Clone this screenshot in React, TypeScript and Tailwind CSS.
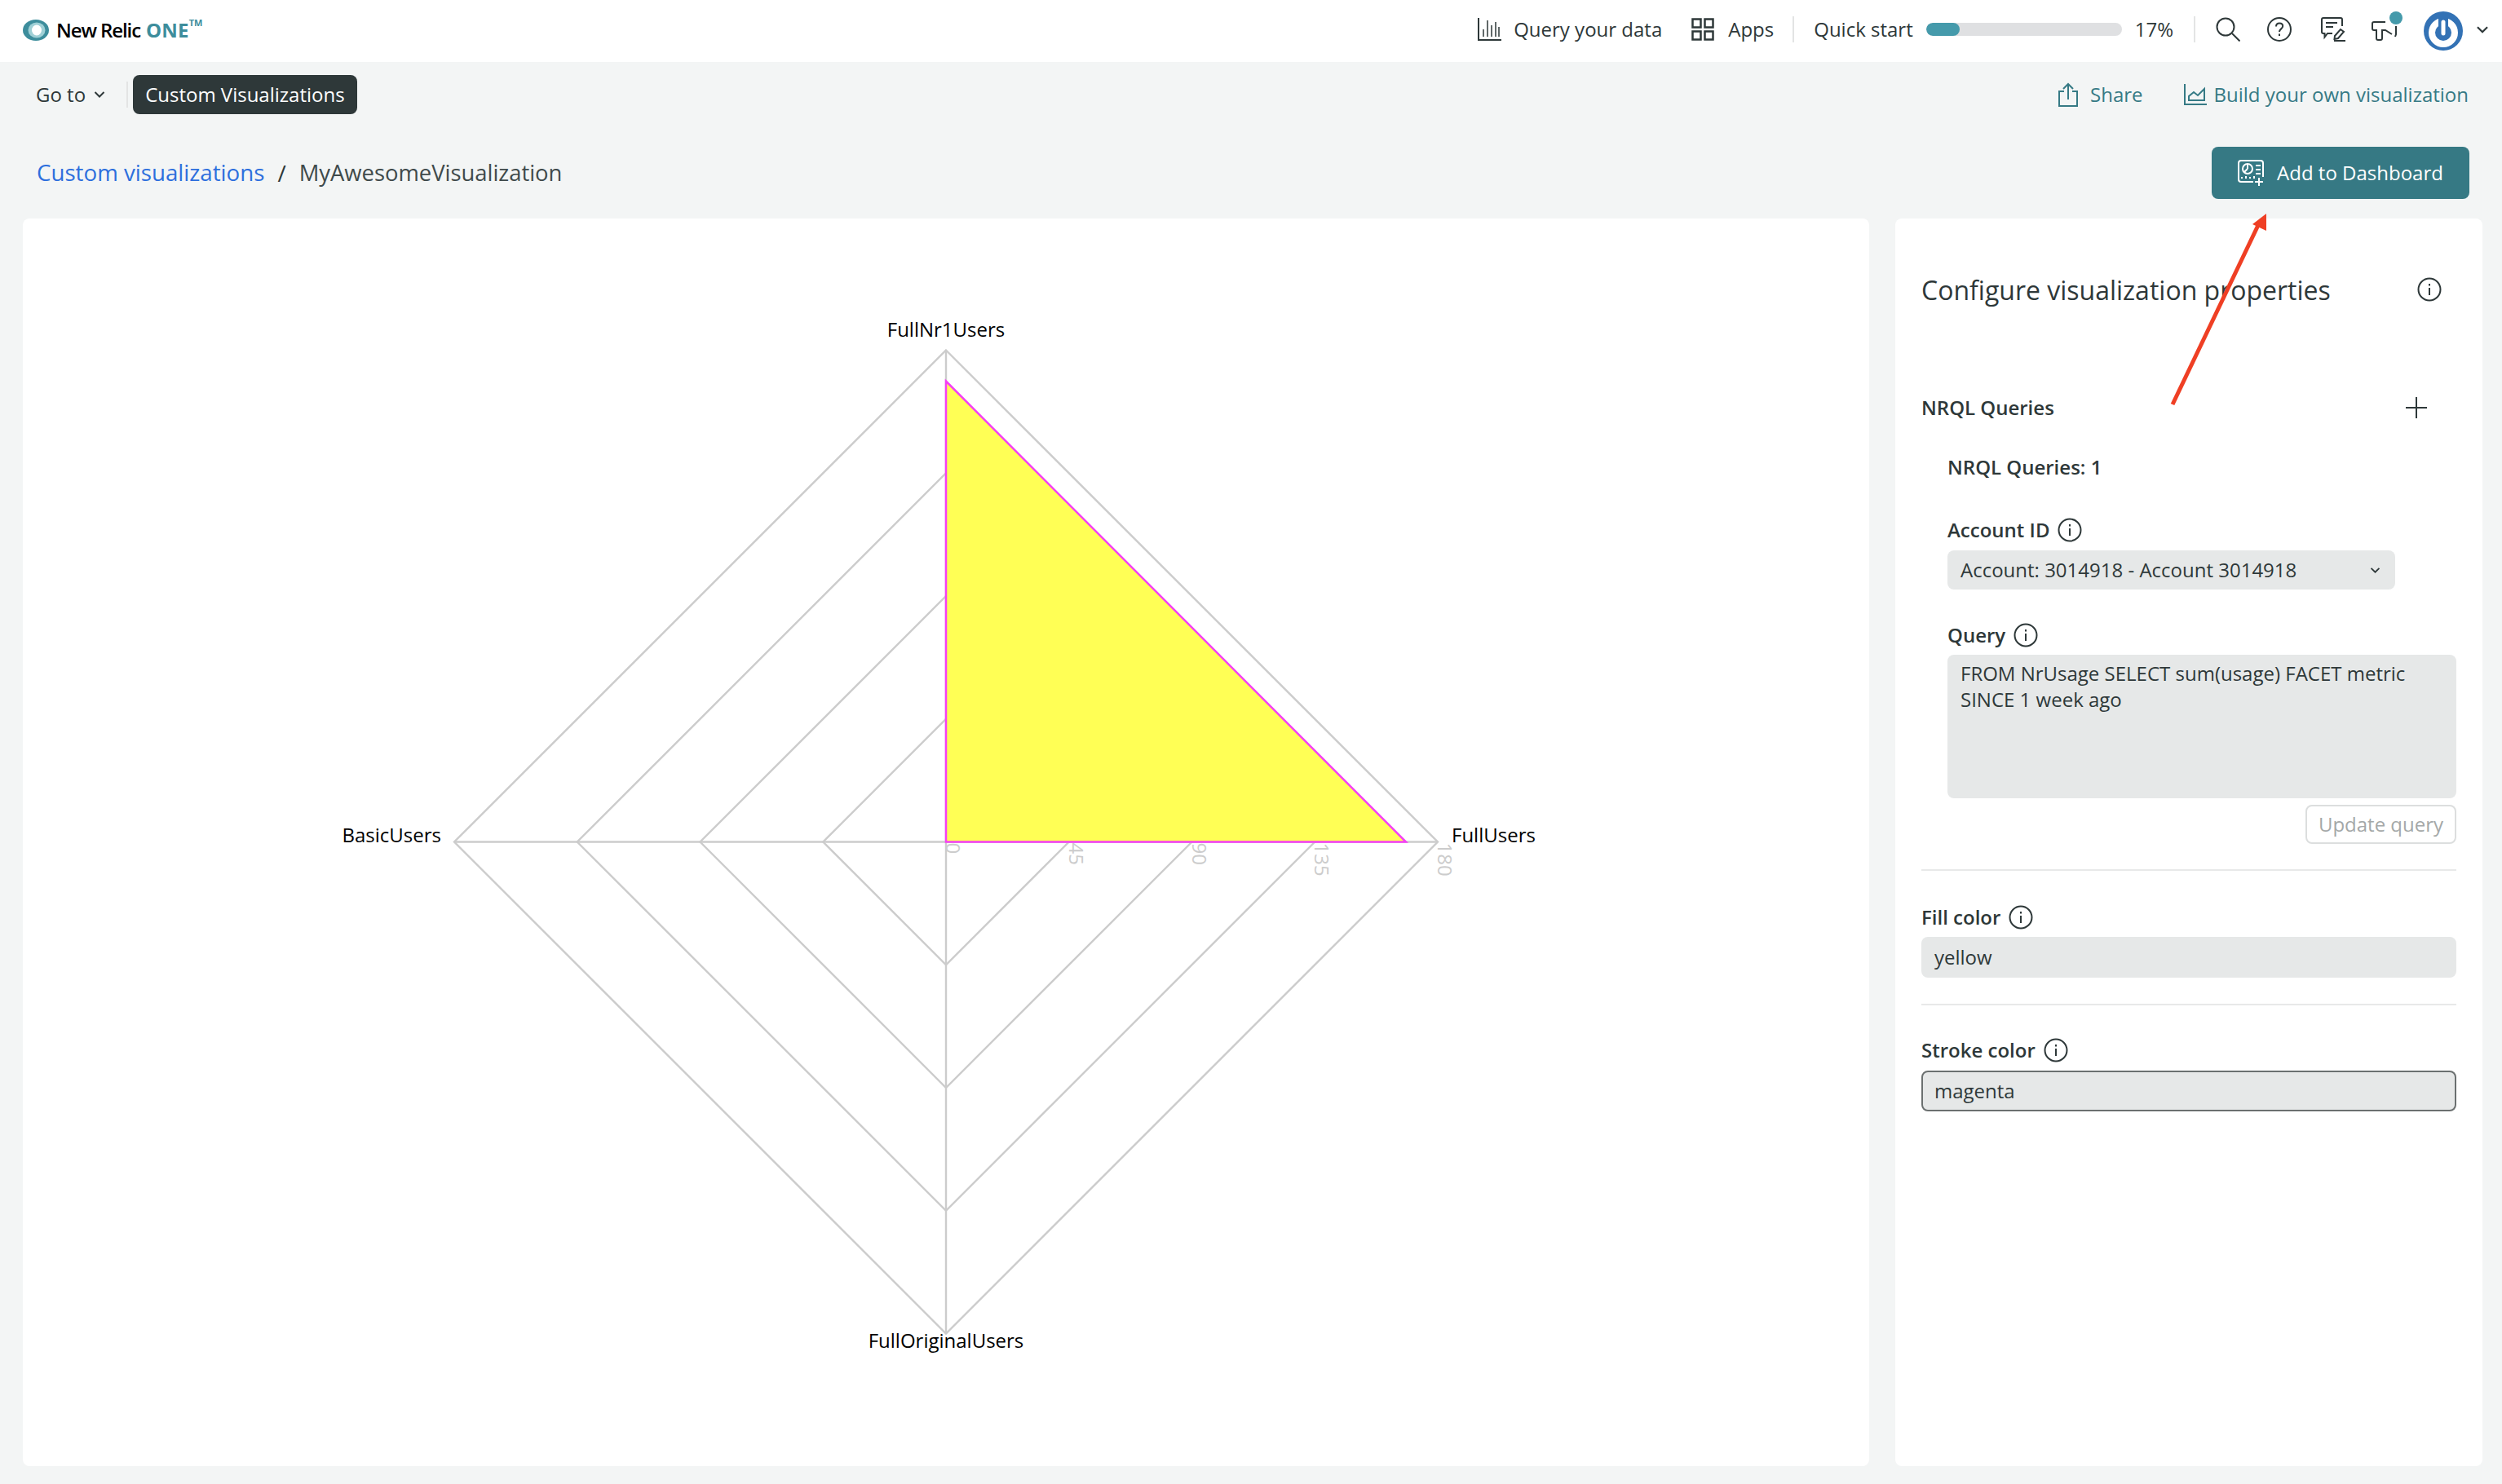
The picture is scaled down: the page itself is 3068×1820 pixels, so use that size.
const sans = { fontFamily: '"Open Sans", "Noto Sans", sans-serif' };

function InfoIcon({ className = "" }: { className?: string }) {
  return (
    <svg viewBox="0 0 30 30" className={`w-[30px] h-[30px] ${className}`} fill="none" stroke="#2e3839" strokeWidth="2">
      <circle cx="15" cy="15" r="13.5" />
      <path d="M15 13v9" />
      <path d="M15 8v2.5" />
    </svg>
  );
}

function Chevron({ className = "" }: { className?: string }) {
  return (
    <svg viewBox="0 0 14 10" className={className} fill="none" stroke="#2e3839" strokeWidth="2">
      <path d="M1.5 2 7 7.5 12.5 2" />
    </svg>
  );
}

function Divider() {
  return <div className="w-[2px] h-[32px] bg-[#e3e4e4]" />;
}

function FieldLabel({ text }: { text: string }) {
  return (
    <div className="flex items-center gap-[10px] h-[30px] text-[24px] font-semibold text-[#2e3839]">
      <span>{text}</span>
      <InfoIcon />
    </div>
  );
}

function RadarChart() {
  const cx = 1160;
  const cy = 1032.5;
  const rings = [150.75, 301.5, 452.25, 603];
  const ticks = ["0", "45", "90", "135", "180"];
  return (
    <svg viewBox="28 268 2264 1530" className="w-full h-full">
      {rings.map((r) => (
        <polygon
          key={r}
          points={`${cx},${cy - r} ${cx + r},${cy} ${cx},${cy + r} ${cx - r},${cy}`}
          fill="none"
          stroke="#cccccc"
          strokeWidth="2.4"
        />
      ))}
      <path d={`M${cx} ${cy - 603}V${cy + 603}M${cx - 603} ${cy}H${cx + 603}`} stroke="#cccccc" strokeWidth="2.4" />
      <polygon
        points={`${cx},${cy - 565} ${cx + 564},${cy} ${cx},${cy}`}
        fill="#ffff55"
        stroke="#f53ff5"
        strokeWidth="2.5"
      />
      {ticks.map((t, i) => (
        <text
          key={t}
          x={cx + i * 150.75}
          y={cy + 1}
          transform={`rotate(90 ${cx + i * 150.75} ${cy + 1})`}
          fontSize="24"
          fill="#cccccc"
          style={sans}
        >
          {t}
        </text>
      ))}
      <g fontSize="24" fill="#000000" style={sans}>
        <text x={1160} y={413} textAnchor="middle">FullNr1Users</text>
        <text x={1780} y={1033}>FullUsers</text>
        <text x={541} y={1033} textAnchor="end">BasicUsers</text>
        <text x={1160} y={1653} textAnchor="middle">FullOriginalUsers</text>
      </g>
    </svg>
  );
}

export default function App() {
  return (
    <div className="relative w-[3068px] h-[1820px] overflow-hidden bg-[#f3f5f5] text-[#2e3839]" style={sans}>
      <header className="h-[76px] bg-white flex items-center pl-[28px] pr-[16px]">
        <div className="flex items-center pb-[2px]">
          <svg viewBox="0 0 32 26" className="w-[32px] h-[26px]">
            <ellipse cx="16" cy="13" rx="16" ry="13" fill="#3d8d9c" />
            <ellipse cx="17" cy="13" rx="10.5" ry="9.5" fill="#9fd0d6" />
            <ellipse cx="17" cy="13" rx="6" ry="6.5" fill="#ffffff" />
          </svg>
          <span className="ml-[9px] text-[24px] font-semibold text-black tracking-[-1.1px]">New Relic</span>
          <span className="ml-[7px] text-[24px] font-bold text-[#3d8d9c] tracking-[0.2px]">ONE</span>
          <span className="text-[11px] font-bold text-[#3d8d9c] self-start leading-none mt-[3px]">TM</span>
        </div>
        <div className="ml-auto flex items-center text-[24px] pb-[4px] h-full">
          <svg viewBox="0 0 29 28" className="w-[29px] h-[28px]" fill="none" stroke="#2e3839" strokeWidth="2">
            <path d="M1 0v27h28" />
            <path d="M7 14v9M12 3v20M17 9v14M22 5v18M26 11v12" strokeWidth="1.5" />
          </svg>
          <span className="ml-[15px]">Query your data</span>
          <svg viewBox="0 0 28 28" className="ml-[36px] w-[28px] h-[28px]" fill="none" stroke="#2e3839" strokeWidth="2.5">
            <rect x="1.5" y="1.5" width="10" height="10" />
            <rect x="16.5" y="1.5" width="10" height="10" />
            <rect x="1.5" y="16.5" width="10" height="10" />
            <rect x="16.5" y="16.5" width="10" height="10" />
          </svg>
          <span className="ml-[17px]">Apps</span>
          <div className="ml-[23px]"><Divider /></div>
          <span className="ml-[24px]">Quick start</span>
          <div className="ml-[16px] w-[240px] h-[16px] rounded-full bg-[#dfe0e2] overflow-hidden">
            <div className="h-full rounded-full bg-[#459aab]" style={{ width: "17%" }} />
          </div>
          <span className="ml-[16px]">17%</span>
          <div className="ml-[25px]"><Divider /></div>
          <svg viewBox="0 0 30 30" className="ml-[25px] w-[30px] h-[30px]" fill="none" stroke="#2e3839" strokeWidth="2">
            <circle cx="12" cy="12" r="10.5" />
            <path d="m20 20 9.5 9.5" />
          </svg>
          <svg viewBox="0 0 30 30" className="ml-[33px] w-[30px] h-[30px]" fill="none" stroke="#2e3839" strokeWidth="2">
            <circle cx="15" cy="15" r="14" />
            <path d="M11 11.5c0-2.5 1.8-4 4.2-4s4 1.5 4 3.6c0 3.2-4.2 3.4-4.2 6.9" />
            <path d="M15 20.5V23" />
          </svg>
          <svg viewBox="0 0 31 30" className="ml-[36px] w-[31px] h-[30px]" fill="none" stroke="#2e3839" strokeWidth="2">
            <path d="M14 20H8l-3.500 4.500V20H3a2 2 0 0 1-2-2V3a2 2 0 0 1 2-2h21a2 2 0 0 1 2 2v8" />
            <path d="M6 7h14M6 12h9" />
            <path d="m17 23 7-8 4 3-7 8-4.500 1z" />
            <path d="M16 29h14" />
          </svg>
          <div className="relative ml-[31px] w-[32px] h-[32px]">
            <svg viewBox="0 0 32 32" className="w-[32px] h-[32px]" fill="none" stroke="#2e3839" strokeWidth="2">
              <path d="M17 7H3a2 2 0 0 0-2 2v6a2 2 0 0 0 2 2h3v10a2 2 0 0 0 2 2h3a2 2 0 0 0 2-2V17h4l8 5" />
              <path d="M30 12v10l-1 3" />
            </svg>
            <div className="absolute right-[-6px] top-[-6px] w-[16px] h-[16px] rounded-full bg-[#459aab]" />
          </div>
          <svg viewBox="0 0 48 48" className="ml-[32px] w-[48px] h-[48px] mt-[4px]">
            <circle cx="24" cy="24" r="24" fill="#3372b5" />
            <circle cx="24" cy="26" r="14" fill="none" stroke="#ffffff" strokeWidth="8" />
            <path d="M24 6v18" stroke="#3372b5" strokeWidth="12" />
            <path d="M24 13v14" stroke="#ffffff" strokeWidth="5" strokeLinecap="round" />
          </svg>
          <Chevron className="ml-[16px] w-[16px] h-[11px]" />
        </div>
      </header>

      <div className="h-[78px] flex items-center pl-[44px] pr-[41px] pt-[2px]">
        <span className="text-[24px]">Go to</span>
        <Chevron className="ml-[10px] w-[14px] h-[10px]" />
        <div className="ml-[26px]"><Divider /></div>
        <div className="ml-[6px] h-[48px] px-[15px] flex items-center rounded-[8px] bg-[#2e3839] text-[24px] font-medium text-white">
          Custom Visualizations
        </div>
        <div className="ml-auto flex items-center text-[24px] text-[#367a85]">
          <svg viewBox="0 0 24 30" className="w-[24px] h-[30px]" fill="none" stroke="#367a85" strokeWidth="2">
            <path d="M7 11H1v18h22V11h-6" />
            <path d="M12 21V2M6 8l6-6 6 6" />
          </svg>
          <span className="ml-[15px]">Share</span>
          <svg viewBox="0 0 28 26" className="ml-[50px] w-[28px] h-[26px]" fill="none" stroke="#367a85" strokeWidth="2">
            <path d="M1 0v25h27" />
            <path d="M6 20v-5l6-5 5 4 8-8v14z" />
          </svg>
          <span className="ml-[9px]">Build your own visualization</span>
        </div>
      </div>

      <div className="h-[114px] flex items-center pl-[45px] pr-[40px] pt-[2px]">
        <span className="text-[27.7px] text-[#2d6fdd]">Custom visualizations</span>
        <span className="ml-[16px] text-[28px] text-[#2e3839]">/</span>
        <span className="ml-[16px] text-[27.4px] text-[#3f4a4b]">MyAwesomeVisualization</span>
        <button className="ml-auto h-[64px] w-[316px] flex items-center justify-center gap-[16px] rounded-[8px] bg-[#367984] text-[24px] font-medium text-white">
          <svg viewBox="0 0 32 32" className="w-[32px] h-[32px]" fill="none" stroke="#ffffff" strokeWidth="2">
            <path d="M19 27H4a3 3 0 0 1-3-3V4a3 3 0 0 1 3-3h24a3 3 0 0 1 3 3v17" />
            <circle cx="12" cy="11" r="6" />
            <path d="M12 11V5M12 11l-4 4" />
            <path d="M22 7h6M22 12h6M22 17h6M5 23v-2M10 23v-3M15 23v-2M20 23v-3" />
            <path d="M26 22v10M21 27h10" />
          </svg>
          <span>Add to Dashboard</span>
        </button>
      </div>

      <main className="h-[1530px] flex pl-[28px]">
        <section className="w-[2264px] h-full rounded-[8px] bg-white overflow-hidden">
          <RadarChart />
        </section>
        <aside className="ml-[32px] w-[720px] h-full rounded-[8px] bg-white pl-[32px] pr-[32px]">
          <div className="h-[202px] pt-[68px] flex items-start pr-[18px]">
            <h2 className="text-[32px] leading-[40px]">Configure visualization properties</h2>
            <InfoIcon className="ml-auto mt-[4px]" />
          </div>
          <div className="flex items-center h-[60px] pr-[36px] text-[24px] font-semibold">
            <span>NRQL Queries</span>
            <svg viewBox="0 0 26 26" className="ml-auto w-[26px] h-[26px]" stroke="#2e3839" strokeWidth="2">
              <path d="M13 0v26M0 13h26" />
            </svg>
          </div>
          <div className="pl-[32px]">
            <div className="mt-[27px] text-[24px] font-semibold leading-[32px]">NRQL Queries: 1</div>
            <div className="mt-[46px]"><FieldLabel text="Account ID" /></div>
            <div className="mt-[10px] w-[549px] h-[48px] rounded-[8px] bg-[#e6e8e8] flex items-center pl-[16px] pr-[18px] text-[24px]">
              <span>Account: 3014918 - Account 3014918</span>
              <Chevron className="ml-auto w-[13px] h-[9px]" />
            </div>
            <div className="mt-[41px]"><FieldLabel text="Query" /></div>
            <div className="mt-[9px] h-[176px] rounded-[8px] bg-[#e6e8e8] px-[16px] py-[7px] text-[24px] leading-[32px]">
              FROM NrUsage SELECT sum(usage) FACET metric SINCE 1 week ago
            </div>
            <div className="mt-[8px] flex justify-end">
              <button className="w-[185px] h-[48px] rounded-[8px] border-2 border-[#dcdede] text-[24px] text-[#a4a8a8]">
                Update query
              </button>
            </div>
          </div>
          <div className="mt-[31px] h-[2px] bg-[#e8e9e9]" />
          <div className="mt-[42px]"><FieldLabel text="Fill color" /></div>
          <div className="mt-[9px] h-[50px] rounded-[8px] bg-[#e6e8e8] flex items-center px-[16px] text-[24px]">yellow</div>
          <div className="mt-[32px] h-[2px] bg-[#e8e9e9]" />
          <div className="mt-[40px]"><FieldLabel text="Stroke color" /></div>
          <div className="mt-[10px] h-[50px] rounded-[8px] bg-[#e6e8e8] border-2 border-[#6b7070] flex items-center px-[14px] text-[24px]">magenta</div>
        </aside>
      </main>

      {/* red annotation arrow drawn on top of the screenshot */}
      <svg viewBox="0 0 3068 1820" className="absolute inset-0 w-[3068px] h-[1820px] pointer-events-none">
        <path d="M2664 496 2771 272" stroke="#ef3f24" strokeWidth="5" fill="none" />
        <polygon points="2779,262 2779,283 2762,275" fill="#ef3f24" />
      </svg>
    </div>
  );
}
